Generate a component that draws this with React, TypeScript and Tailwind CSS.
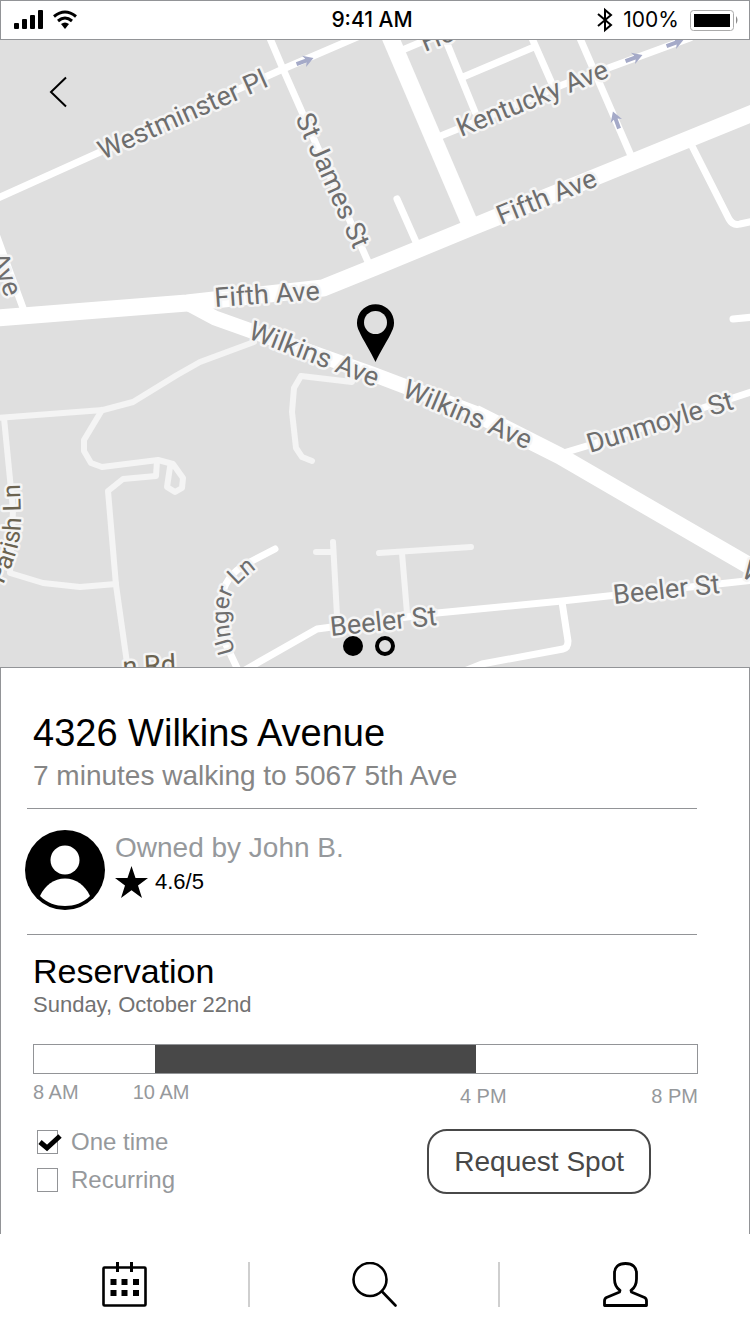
import React, { useState } from "react";

type Label = { text: string; x: number; y: number; angle: number; brown?: boolean };

const minorRoads = [
  "M-4 199L98 153L283 69L362 35",
  "M269 36L283 69L369 264",
  "M-4 234L23 308",
  "M397 199L416 242",
  "M400 51L450 30",
  "M444 36L475 112",
  "M463 77L534 47",
  "M531 36L553 86",
  "M438 137L475 122L562 85L690 38",
  "M579 36L632 158",
  "M692 146L729 219Q733 226 740 224L754 221",
  "M733 319L754 317",
  "M560 454L590 445L754 391",
  "M275 549L248 563Q223 576 221 602L222 636L238 670",
  "M245 670L317 629L437 613L562 601L754 580",
  "M562 602L568 641Q568 648 563 649L482 664L462 672",
];

const serviceRoads = [
  "M-4 418L103 410L133 402L177 375L200 362L254 342",
  "M102 410L84 440L84 451L91 463L102 467L158 460L173 464L183 478L182 488L175 492L167 487L170 467",
  "M157 461L156 476L123 479L108 491L116 585L128 670",
  "M4 418L13 510L10 573L43 583L80 587L116 584",
  "M352 382L301 376L294 388L292 412L296 448L302 457L312 461",
  "M333 542L337 616",
  "M316 552L333 552",
  "M379 553L471 547",
  "M402 553L407 613",
];

const labels: Label[] = [
  { text: "Westminster Pl", x: 103, y: 160, angle: -24 },
  { text: "St James St", x: 295, y: 118, angle: 66 },
  { text: "Fifth Ave", x: 215, y: 307, angle: -4 },
  { text: "Fifth Ave", x: 501, y: 225, angle: -22 },
  { text: "Kentucky Ave", x: 461, y: 137, angle: -22 },
  { text: "Wilkins Ave", x: 247, y: 338, angle: 21 },
  { text: "Wilkins Ave", x: 401, y: 396, angle: 23 },
  { text: "Dunmoyle St", x: 590, y: 453, angle: -17 },
  { text: "Beeler St", x: 331, y: 636, angle: -6 },
  { text: "Beeler St", x: 614, y: 604, angle: -6 },
  { text: "Ave", x: -11, y: 257, angle: 68 },
  { text: "Ho", x: 425, y: 52, angle: -22 },
  { text: "W", x: 740, y: 576, angle: 28 },
  { text: "n Rd", x: 123, y: 676, angle: -3, brown: true },
];

const arrows = [
  { x: 305, y: 61, angle: -20 },
  { x: 634, y: 58, angle: -20 },
  { x: 675, y: 43, angle: -20 },
  { x: 616, y: 120, angle: -110 },
];

function StreetMap() {
  return (
    <svg viewBox="0 40 750 627" className="block w-full" role="img" aria-label="Map of streets around 4326 Wilkins Avenue">
      <rect x="0" y="40" width="750" height="627" fill="#dfdfdf" />
      <g fill="none" strokeLinecap="round" strokeLinejoin="round">
        <g stroke="#f4f4f4" strokeWidth="6">
          {serviceRoads.map((d) => <path key={d} d={d} />)}
        </g>
        <g stroke="#fff" strokeWidth="7">
          {minorRoads.map((d) => <path key={d} d={d} />)}
        </g>
        <g stroke="#fff" strokeWidth="17" strokeLinecap="butt">
          <path d="M-4 318L187 303L323 288L375 267L470 228L630 163L760 110" />
          <path d="M388 32L470 224" />
          <path d="M475 413L560 456L760 572" />
          <path d="M187 303L215 318L375 375L480 415" strokeWidth="15" />
        </g>
      </g>
      <g fill="#a5aac8">
        {arrows.map((a) => (
          <path
            key={`${a.x}-${a.y}`}
            transform={`translate(${a.x} ${a.y}) rotate(${a.angle})`}
            d="M-9 -2H1L-1 -6L9 0L-1 6L1 2H-9Z"
          />
        ))}
      </g>
      <defs>
        <path id="unger" d="M235 652L231 638C227 616 227 602 234 590Q240 580 268 560" />
        <path id="parish" d="M-14 618C4 580 20 560 21 520L20 484" />
      </defs>
      <g fontFamily="Roboto, sans-serif" fontSize="27" stroke="#f5f5f5" strokeWidth="5" strokeLinejoin="round" paintOrder="stroke">
        {labels.map((l) => (
          <text key={`${l.text}-${l.x}`} transform={`translate(${l.x} ${l.y}) rotate(${l.angle})`} fill={l.brown ? "#6b6350" : "#6e6e6e"}>
            {l.text}
          </text>
        ))}
        <text fontSize="24" fill="#6e6e6e"><textPath href="#unger">Unger Ln</textPath></text>
        <text fontSize="25" fill="#6b6350" textAnchor="end"><textPath href="#parish" startOffset="100%">Parish Ln</textPath></text>
      </g>
      <path d="M375.500 362C371 352 363 340 359.500 332A18.500 18.500 0 1 1 391.500 332C388 340 380 352 375.500 362Z" fill="#000" />
      <circle cx="375.500" cy="322.500" r="11.500" fill="#dfdfdf" />
    </svg>
  );
}

function StatusBar() {
  return (
    <header className="grid h-10 grid-cols-[1fr_auto_1fr] items-center border border-[#929497] bg-white pr-1.5">
      <div className="flex items-center gap-2.5 pl-[13px]">
        <svg width="29" height="20" viewBox="0 0 29 20" aria-label="Signal">
          <rect x="0" y="13" width="5" height="6" rx="1" />
          <rect x="8" y="9" width="5" height="10" rx="1" />
          <rect x="16" y="5" width="5" height="14" rx="1" />
          <rect x="24" y="0" width="5" height="19" rx="1" />
        </svg>
        <svg width="24" height="20" viewBox="0 0 24 20" aria-label="Wi-Fi">
          <g fill="none" stroke="#000" strokeWidth="3">
            <path d="M1 6.500Q12 -2.500 23 6.500" />
            <path d="M5 11Q12 5 19 11" />
          </g>
          <path d="M8 14Q12 11 16 14L12 19Z" />
        </svg>
      </div>
      <time className="font-['Inter',sans-serif] text-[21px] leading-6 font-medium">9:41 AM</time>
      <div className="flex items-center justify-end gap-2.5 pr-1">
        <svg width="16" height="26" viewBox="0 0 16 26" fill="none" stroke="#000" strokeWidth="2" aria-label="Bluetooth">
          <path d="M1 7L14 18L8 23V3L14 8L1 19" />
        </svg>
        <span className="font-['Inter',sans-serif] text-[21px] leading-6">100%</span>
        <svg width="50" height="22" viewBox="0 0 50 22" aria-label="Battery full">
          <rect x="1.500" y="1.500" width="43" height="20" rx="3" fill="none" stroke="#aaa" />
          <rect x="5" y="5" width="36" height="13" />
          <path d="M47 7Q50 11 47 15Z" fill="#888" />
        </svg>
      </div>
    </header>
  );
}

function Option({ label, checked, onChange }: { label: string; checked: boolean; onChange: () => void }) {
  return (
    <label className="flex items-center gap-[13px] text-2xl leading-7 text-[#96999c]">
      <span className="relative flex">
        <input
          type="checkbox"
          checked={checked}
          onChange={onChange}
          className="h-6 w-[21px] appearance-none border border-[#929497] bg-white"
        />
        {checked && (
          <svg className="pointer-events-none absolute top-0 left-0" width="26" height="24" viewBox="0 0 26 24" fill="none" stroke="#000" strokeWidth="5" aria-hidden="true">
            <path d="M3 12L10 18L23 6" />
          </svg>
        )}
      </span>
      {label}
    </label>
  );
}

export default function App() {
  const [oneTime, setOneTime] = useState(true);
  const [recurring, setRecurring] = useState(false);

  return (
    <div className="flex min-h-screen flex-col bg-white font-['Liberation_Sans',Arial,sans-serif] text-black">
      <StatusBar />

      <section className="relative">
        <StreetMap />
        <button aria-label="Back" className="absolute top-9 left-12">
          <svg width="20" height="32" viewBox="0 0 20 32" fill="none" stroke="#000" strokeWidth="2">
            <path d="M18 1.500L3 16L18 30.500" />
          </svg>
        </button>
        <div className="absolute inset-x-0 bottom-[11px] flex justify-center gap-3 pr-3">
          <button aria-label="Map" className="size-5 rounded-full bg-black" />
          <button aria-label="Photo" className="size-5 rounded-full border-4 border-black bg-[#dfdfdf]" />
        </div>
      </section>

      <main className="flex-1 border-x border-t border-[#929497]">
        <div className="px-8 pt-[43px] pb-4">
          <h1 className="text-[38px] leading-[44px]">4326 Wilkins Avenue</h1>
          <p className="mt-[5px] text-[28px] leading-8 text-[#868686]">7 minutes walking to 5067 5th Ave</p>
        </div>
        <hr className="mr-[52px] ml-[26px] border-[#929497]" />

        <div className="flex gap-2.5 px-6 pt-[21px] pb-6">
          <svg width="80" height="80" viewBox="0 0 80 80" aria-label="John B.">
            <circle cx="40" cy="40" r="40" />
            <circle cx="40" cy="30" r="14.500" fill="#fff" />
            <path d="M15 66C20 55 29 48.500 40 48.500S60 55 65 66C58 73 49 76 40 76S22 73 15 66Z" fill="#fff" />
          </svg>
          <div className="pt-0.5">
            <p className="text-[28px] leading-8 text-[#96999c]">Owned by John B.</p>
            <p className="mt-0.5 flex items-center gap-[7px] text-[22px] leading-6">
              <svg width="33" height="32" viewBox="0 0 33 32" aria-hidden="true">
                <path d="M16.500 0L20.500 12H33L23 19.500L27 32L16.500 24.300L6 32L10 19.500L0 12H12.500Z" />
              </svg>
              4.6/5
            </p>
          </div>
        </div>
        <hr className="mr-[52px] ml-[26px] border-[#929497]" />

        <div className="pt-4 pr-[51px] pb-[39px] pl-8">
          <h2 className="text-[34px] leading-10">Reservation</h2>
          <p className="mt-0.5 text-[22px] leading-6 text-[#727272]">Sunday, October 22nd</p>

          <div className="mt-[27px] flex h-[30px] border border-[#929497]" role="img" aria-label="Reserved from 10 AM to 4 PM">
            <div className="w-[18.3%]" />
            <div className="w-[48.4%] bg-[#484848]" />
          </div>
          <div className="mt-1.5 flex text-xl leading-6 text-[#96999c]">
            <span className="w-[15%]">8 AM</span>
            <span className="w-[49.2%]">10 AM</span>
            <div className="flex flex-1 justify-between pt-1">
              <span>4 PM</span>
              <span>8 PM</span>
            </div>
          </div>

          <div className="mt-5 flex items-start justify-between pr-[47px] pl-1">
            <div className="flex flex-col gap-2.5">
              <Option label="One time" checked={oneTime} onChange={() => setOneTime(!oneTime)} />
              <Option label="Recurring" checked={recurring} onChange={() => setRecurring(!recurring)} />
            </div>
            <button className="mt-px rounded-[20px] border-2 border-[#484848] px-[25px] py-3.5 text-[28px] leading-[33px] text-[#484848]">
              Request Spot
            </button>
          </div>
        </div>
      </main>

      <nav className="grid grid-cols-3 divide-x-2 divide-[#cfcfcf] pt-7 pb-[27px]">
        <a href="#calendar" aria-label="Calendar" className="flex justify-center">
          <svg width="45" height="45" viewBox="0 0 45 45">
            <rect x="1.500" y="5.500" width="42" height="38" rx="1" fill="none" stroke="#000" strokeWidth="2.600" />
            <path d="M15.500 0V10M29.500 0V10" stroke="#000" strokeWidth="3" />
            <path d="M8.500 17h6v6h-6zM19.500 17h6v6h-6zM31 17h6v6h-6zM8.500 28h6v6h-6zM19.500 28h6v6h-6zM31 28h6v6h-6z" />
          </svg>
        </a>
        <a href="#search" aria-label="Search" className="flex justify-center">
          <svg width="45" height="45" viewBox="0 0 45 45" fill="none" stroke="#000" strokeWidth="2.600" strokeLinecap="round">
            <circle cx="18" cy="17.500" r="16.500" />
            <path d="M30 29.500L43.500 43.500" />
          </svg>
        </a>
        <a href="#profile" aria-label="Profile" className="flex justify-center">
          <svg width="45" height="45" viewBox="0 0 45 45" fill="none" stroke="#000" strokeWidth="2.800" strokeLinejoin="round">
            <path d="M22.500 1.500C15 1.500 11.500 5.500 11.500 11V17C11.500 22.500 13.500 26 17 28.500Q17 30 15.500 30.500L3.500 35.500Q1.500 36.500 1.500 39V43.500H43.500V39Q43.500 36.500 41.500 35.500L29.500 30.500Q28 30 28 28.500C31.500 26 33.500 22.500 33.500 17V11C33.500 5.500 30 1.500 22.500 1.500Z" />
          </svg>
        </a>
      </nav>
    </div>
  );
}
